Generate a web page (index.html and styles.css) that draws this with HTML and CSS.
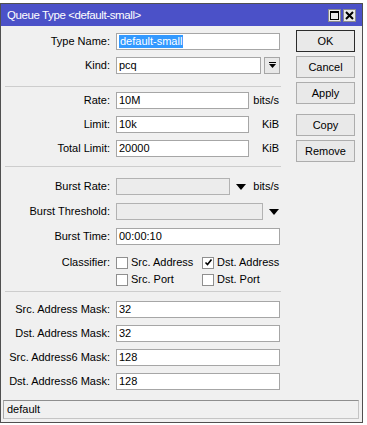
FILE: index.html
```html
<!DOCTYPE html>
<html lang="en">
<head>
    <meta charset="UTF-8">
    <title>Queue Type &lt;default-small&gt;</title>
    <link rel="stylesheet" href="styles.css">
</head>
<body>

<div class="window">
    <div class="titlebar">
        <span class="title">Queue Type &lt;default-small&gt;</span>
        <div class="title-btns">
            <span class="tbtn">
                <svg width="9" height="9" viewBox="0 0 9 9"><rect x="0.5" y="0.5" width="8" height="8" fill="none" stroke="#000"/><rect x="0" y="0" width="9" height="2" fill="#000"/></svg>
            </span>
            <span class="tbtn">
                <svg width="9" height="9" viewBox="0 0 9 9"><path d="M1 1 L8 8 M8 1 L1 8" stroke="#000" stroke-width="2"/></svg>
            </span>
        </div>
    </div>

    <div class="content">
        <div class="form">
            <div class="section s1">
                <div class="row">
                    <label>Type Name:</label>
                    <div class="field"><div class="box full"><span class="sel">default-small</span></div></div>
                </div>
                <div class="row">
                    <label>Kind:</label>
                    <div class="field">
                        <div class="box kind">pcq</div>
                        <div class="dropbtn">
                            <svg width="7" height="7" viewBox="0 0 7 7"><rect x="0" y="0" width="7" height="1" fill="#000"/><polygon points="0,2 7,2 3.5,6" fill="#000"/></svg>
                        </div>
                    </div>
                </div>
            </div>

            <div class="sep sep1"></div>

            <div class="section s2">
                <div class="row">
                    <label>Rate:</label>
                    <div class="field"><div class="box short">10M</div><span class="unit">bits/s</span></div>
                </div>
                <div class="row">
                    <label>Limit:</label>
                    <div class="field"><div class="box short">10k</div><span class="unit">KiB</span></div>
                </div>
                <div class="row">
                    <label>Total Limit:</label>
                    <div class="field"><div class="box short">20000</div><span class="unit">KiB</span></div>
                </div>
            </div>

            <div class="sep sep2"></div>

            <div class="section s3">
                <div class="row">
                    <label>Burst Rate:</label>
                    <div class="field">
                        <div class="box off burst"></div>
                        <svg class="arrow" width="10" height="6" viewBox="0 0 10 6"><polygon points="0,0 10,0 5,6" fill="#000"/></svg>
                        <span class="unit">bits/s</span>
                    </div>
                </div>
                <div class="row">
                    <label>Burst Threshold:</label>
                    <div class="field">
                        <div class="box off thresh"></div>
                        <svg class="arrow" width="10" height="6" viewBox="0 0 10 6"><polygon points="0,0 10,0 5,6" fill="#000"/></svg>
                    </div>
                </div>
                <div class="row">
                    <label>Burst Time:</label>
                    <div class="field"><div class="box full">00:00:10</div></div>
                </div>
            </div>

            <div class="classifier">
                <label>Classifier:</label>
                <div class="checks">
                    <span class="check"><span class="cb"></span>Src. Address</span>
                    <span class="check"><span class="cb">
                        <svg width="9" height="9" viewBox="0 0 9 9"><path d="M1.5 4.5 L3.5 6.5 L7.5 1.5" fill="none" stroke="#000" stroke-width="1.6"/></svg>
                    </span>Dst. Address</span>
                    <span class="check"><span class="cb"></span>Src. Port</span>
                    <span class="check"><span class="cb"></span>Dst. Port</span>
                </div>
            </div>

            <div class="sep sep3"></div>

            <div class="section s4">
                <div class="row">
                    <label>Src. Address Mask:</label>
                    <div class="field"><div class="box full">32</div></div>
                </div>
                <div class="row">
                    <label>Dst. Address Mask:</label>
                    <div class="field"><div class="box full">32</div></div>
                </div>
                <div class="row">
                    <label>Src. Address6 Mask:</label>
                    <div class="field"><div class="box full">128</div></div>
                </div>
                <div class="row">
                    <label>Dst. Address6 Mask:</label>
                    <div class="field"><div class="box full">128</div></div>
                </div>
            </div>
        </div>

        <div class="buttons">
            <div class="btn default">OK</div>
            <div class="btn">Cancel</div>
            <div class="btn">Apply</div>
            <div class="btn spaced">Copy</div>
            <div class="btn">Remove</div>
        </div>
    </div>

    <div class="status">default</div>
</div>

</body>
</html>
```

FILE: styles.css
```css
body {
    margin: 0;
    background-color: #ffffff;
    font-family: "Liberation Sans", Arial, sans-serif;
    font-size: 11px;
    color: #000;
}
.window {
    width: 361px;
    margin-top: 3px;
    border: 1px solid #505050;
    background-color: #f0f0f0;
}
.titlebar {
    height: 22px;
    background-color: #4b51c8;
    color: #fff;
    display: flex;
    align-items: center;
    justify-content: space-between;
    padding: 0 6px;
}
.title {
    font-size: 11.5px;
    letter-spacing: -0.4px;
}
.title-btns {
    display: flex;
    gap: 2px;
}
.tbtn {
    width: 11px;
    height: 11px;
    background-color: #eaeaea;
    border: 1px solid #8c8c8c;
    display: flex;
    align-items: center;
    justify-content: center;
}
.content {
    display: flex;
}
.form {
    width: 280px;
    padding: 7px 0 10px 0;
}
.section {
    display: flex;
    flex-direction: column;
    gap: 7px;
}
.s3 {
    gap: 8px;
}
.row {
    display: flex;
    height: 17px;
    line-height: 17px;
}
.row label, .classifier label {
    width: 109px;
    padding-right: 6px;
    text-align: right;
    flex-shrink: 0;
}
.field {
    display: flex;
    align-items: center;
    width: 164px;
}
.box {
    height: 15px;
    line-height: 15px;
    border: 1px solid #a6a6a6;
    background-color: #fff;
    padding-left: 2px;
    white-space: nowrap;
    overflow: hidden;
}
.box.full {
    width: 160px;
}
.box.kind {
    width: 142px;
}
.box.short {
    width: 129px;
}
.box.off {
    background-color: #ececec;
    border-color: #b2b2b2;
}
.box.burst {
    width: 110px;
}
.box.thresh {
    width: 143px;
}
.sel {
    background-color: #3399ff;
    color: #fff;
    display: inline-block;
    line-height: 13px;
    padding: 0 1px;
}
.dropbtn {
    width: 14px;
    height: 15px;
    margin-left: 3px;
    border: 1px solid #a6a6a6;
    background-color: #e8e8e8;
    display: flex;
    align-items: center;
    justify-content: center;
}
.unit {
    flex: 1;
    text-align: right;
    padding-right: 1px;
}
.arrow {
    margin-left: 6px;
}
.sep {
    margin-left: 4px;
    width: 276px;
    border-top: 1px solid #cdcdcd;
}
.sep1 {
    margin-top: 12px;
    margin-bottom: 5px;
}
.sep2 {
    margin-top: 9px;
    margin-bottom: 11px;
}
.sep3 {
    margin-top: 3px;
    margin-bottom: 9px;
}
.classifier {
    display: flex;
    margin-top: 9px;
    line-height: 17px;
}
.checks {
    display: grid;
    grid-template-columns: 86px 78px;
}
.check {
    display: flex;
    align-items: center;
    height: 17px;
}
.cb {
    width: 10px;
    height: 10px;
    border: 1px solid #8f8f8f;
    background-color: #fff;
    margin-right: 3px;
    display: flex;
    align-items: center;
    justify-content: center;
}
.buttons {
    display: flex;
    flex-direction: column;
    gap: 4px;
    margin-left: 15px;
    padding-top: 4px;
}
.btn {
    width: 57px;
    height: 20px;
    line-height: 20px;
    text-align: center;
    border: 1px solid #adadad;
    background-color: #e9e9e9;
}
.btn.default {
    border-color: #2b2b2b;
}
.btn.spaced {
    margin-top: 6px;
}
.status {
    margin: 0 3px 3px 2px;
    height: 17px;
    line-height: 17px;
    padding-left: 3px;
    border: 1px solid #c4c4c4;
    border-top-color: #8e8e8e;
    border-left-color: #a8a8a8;
}
```
